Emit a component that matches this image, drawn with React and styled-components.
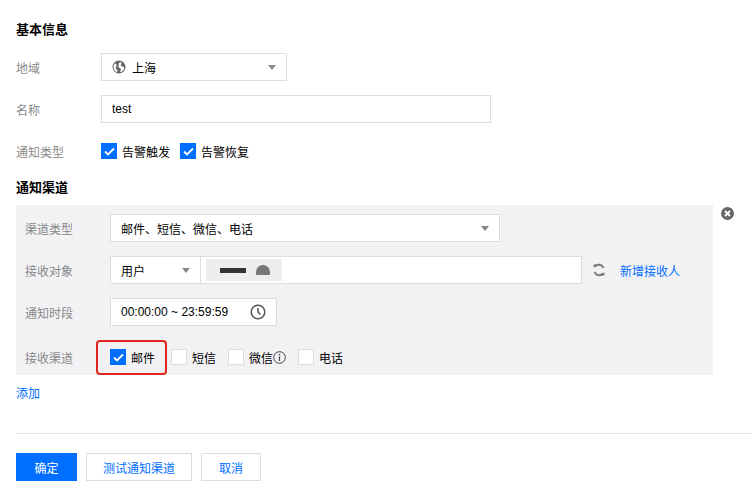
import React from 'react';
import styled, { createGlobalStyle } from 'styled-components';

const Global = createGlobalStyle`
  body {
    margin: 0;
    background: #fff;
    font-family: "Liberation Sans", "Noto Sans CJK SC", sans-serif;
    font-size: 12px;
    color: #000;
  }
`;

const Page = styled.div`
  width: 752px;
  height: 500px;
  padding: 19px 0 0 16px;
  box-sizing: border-box;
`;

const Title = styled.div`
  font-size: 13px;
  font-weight: bold;
  color: #000;
  height: 18px;
  margin-bottom: ${p => p.mb}px;
`;

const Row = styled.div`
  display: flex;
  align-items: center;
  height: 28px;
  margin-bottom: ${p => p.mb || 0}px;
`;

const Label = styled.div`
  width: 85px;
  flex: none;
  color: #888;
`;

const Box = styled.div`
  width: ${p => p.w}px;
  height: 28px;
  box-sizing: border-box;
  background: #fff;
  border: 1px solid #dddddd;
  display: flex;
  align-items: center;
  padding: 0 10px;
  gap: 6px;
  position: relative;
  flex: none;
`;

const Caret = styled.span`
  margin-left: auto;
  width: 0;
  height: 0;
  border-left: 4px solid transparent;
  border-right: 4px solid transparent;
  border-top: 5px solid #888;
`;

const Checks = styled.div`
  display: flex;
  align-items: center;
  gap: ${p => p.gap}px;
`;

const Check = styled.label`
  display: flex;
  align-items: center;
  gap: 5px;
  color: #000;
`;

const Square = styled.span`
  width: 16px;
  height: 16px;
  box-sizing: border-box;
  background: ${p => (p.on ? '#006eff' : '#fff')};
  border: 1px solid ${p => (p.on ? '#006eff' : '#ddd')};
  display: flex;
  align-items: center;
  justify-content: center;
`;

const Panel = styled.div`
  display: flex;
  align-items: flex-start;
  gap: 8px;
  margin-top: 10px;
`;

const Gray = styled.div`
  width: 697px;
  background: #f2f2f5;
  padding: 9px 0 1px 9px;
  box-sizing: border-box;
  display: flex;
  flex-direction: column;
  gap: 14px;
`;

const Tag = styled.div`
  height: 28px;
  background: #fff;
  border: 1px solid #ddd;
  border-left: none;
  box-sizing: border-box;
  display: flex;
  align-items: center;
  padding-left: 2px;
  width: 378px;
  flex: none;
`;

const TagChip = styled.span`
  height: 22px;
  width: 76px;
  background: #eeeef0;
  display: flex;
  align-items: center;
  gap: 10px;
  padding-left: 14px;
  box-sizing: border-box;
`;

const Link = styled.a`
  color: #006eff;
  text-decoration: none;
`;

const Highlight = styled.div`
  border: 2px solid #e0251b;
  border-radius: 4px;
  padding: 7px 10px 7px 12px;
  margin-left: -14px;
  margin-right: 4px;
`;

const Divider = styled.div`
  height: 1px;
  background: #e5e5e5;
  margin: 32px 0 19px;
`;

const Btn = styled.button`
  height: 28px;
  width: ${p => p.w}px;
  box-sizing: border-box;
  font-family: inherit;
  font-size: 12px;
  border: 1px solid ${p => (p.primary ? '#006eff' : '#ddd')};
  background: ${p => (p.primary ? '#006eff' : '#fff')};
  color: ${p => (p.primary ? '#fff' : '#006eff')};
  padding: 0;
`;

const Tick = () => (
  <svg width="11" height="9" viewBox="0 0 11 9">
    <path d="M1 4.5 L4 7.5 L10 1.5" stroke="#fff" strokeWidth="1.8" fill="none" />
  </svg>
);

const Globe = () => (
  <svg width="14" height="14" viewBox="0 0 14 14">
    <circle cx="7" cy="7" r="6.5" fill="#666" />
    <path d="M3 3.5 C5 4 5 6 4 7 C3 8 4.5 9.5 5.5 10 L5 12.5 C3 11.5 1.5 9.5 1.5 7 C1.5 5.5 2 4.4 3 3.5Z M8 2 C9.5 2.5 10 3.5 9 4.5 C8 5.3 9 6.5 10.5 6.5 L12.3 7.5 C12 10 10 12 8 12.3 C8.5 10.5 9.5 9.5 8.5 8.5 C7.5 7.5 6 7.5 6.5 6 C7 4.8 6.3 3.2 8 2Z" fill="#fff" />
  </svg>
);

const Clock = () => (
  <svg width="16" height="16" viewBox="0 0 16 16" style={{ marginLeft: 'auto' }}>
    <circle cx="8" cy="8" r="6.8" stroke="#555" strokeWidth="1.5" fill="none" />
    <path d="M8 4 V8 L10.5 10.5" stroke="#555" strokeWidth="1.5" fill="none" />
  </svg>
);

const Info = () => (
  <svg width="13" height="13" viewBox="0 0 13 13" style={{ marginLeft: -5 }}>
    <circle cx="6.5" cy="6.5" r="5.8" stroke="#444" strokeWidth="1" fill="none" />
    <circle cx="6.5" cy="3.8" r="0.8" fill="#444" />
    <path d="M6.5 5.5 V10" stroke="#444" strokeWidth="1.2" />
  </svg>
);

const Refresh = () => (
  <svg width="14" height="14" viewBox="0 0 14 14" style={{ margin: '0 14px 0 10px' }}>
    <path d="M11.5 5 A5 5 0 0 0 3 3.5" stroke="#777" strokeWidth="2" fill="none" />
    <path d="M2.5 9 A5 5 0 0 0 11 10.5" stroke="#777" strokeWidth="2" fill="none" />
    <path d="M1.5 1.5 L4.5 1.5 L1.8 5Z M12.5 12.5 L9.5 12.5 L12.2 9Z" fill="#777" />
  </svg>
);

const Close = () => (
  <svg width="13" height="13" viewBox="0 0 13 13" style={{ marginTop: 2 }}>
    <circle cx="6.5" cy="6.5" r="6.5" fill="#666" />
    <path d="M4 4 L9 9 M9 4 L4 9" stroke="#fff" strokeWidth="1.8" />
  </svg>
);

export default function App() {
  return (
    <Page>
      <Global />
      <Title mb={16}>基本信息</Title>
      <Row mb={14}>
        <Label>地域</Label>
        <Box w={186}>
          <Globe />
          <span>上海</span>
          <Caret />
        </Box>
      </Row>
      <Row mb={14}>
        <Label>名称</Label>
        <Box w={390}>test</Box>
      </Row>
      <Row mb={12}>
        <Label>通知类型</Label>
        <Checks gap={10}>
          <Check><Square on><Tick /></Square>告警触发</Check>
          <Check><Square on><Tick /></Square>告警恢复</Check>
        </Checks>
      </Row>
      <Title mb={0}>通知渠道</Title>
      <Panel>
        <Gray>
          <Row>
            <Label>渠道类型</Label>
            <Box w={390}>邮件、短信、微信、电话<Caret /></Box>
          </Row>
          <Row>
            <Label>接收对象</Label>
            <Box w={91}>用户<Caret /></Box>
            <span style={{ width: 3, height: 28, background: '#fff', borderTop: '1px solid #ddd', borderBottom: '1px solid #ddd', boxSizing: 'border-box' }} />
            <Tag>
              <TagChip>
                <span style={{ width: 26, height: 5, background: '#333', display: 'inline-block' }} />
                <span style={{ width: 14, height: 10, background: '#777', borderRadius: '7px 7px 1px 1px', display: 'inline-block' }} />
              </TagChip>
            </Tag>
            <Refresh />
            <Link href="#">新增接收人</Link>
          </Row>
          <Row>
            <Label>通知时段</Label>
            <Box w={167}>00:00:00 ~ 23:59:59<Clock /></Box>
          </Row>
          <Row style={{ height: 34 }}>
            <Label>接收渠道</Label>
            <Highlight>
              <Check><Square on><Tick /></Square>邮件</Check>
            </Highlight>
            <Checks gap={12}>
              <Check><Square />短信</Check>
              <Check><Square />微信<Info /></Check>
              <Check><Square />电话</Check>
            </Checks>
          </Row>
        </Gray>
        <Close />
      </Panel>
      <div style={{ marginTop: 9 }}><Link href="#">添加</Link></div>
      <Divider />
      <Checks gap={9}>
        <Btn primary w={61}>确定</Btn>
        <Btn w={106}>测试通知渠道</Btn>
        <Btn w={60}>取消</Btn>
      </Checks>
    </Page>
  );
}
